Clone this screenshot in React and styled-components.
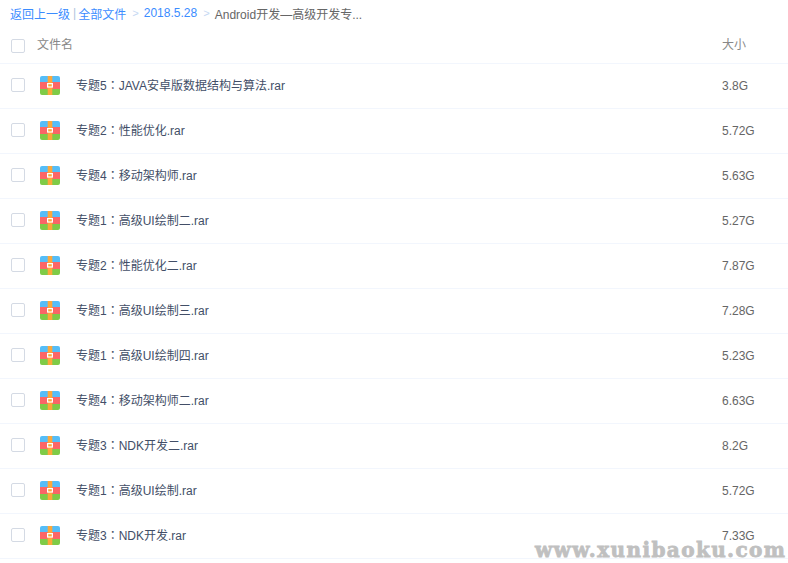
import React from "react";
import styled, { createGlobalStyle } from "styled-components";

const GlobalStyle = createGlobalStyle`
  html, body {
    margin: 0;
    padding: 0;
    background: #fff;
    font-family: "Liberation Sans", "Noto Sans CJK SC", sans-serif;
    font-size: 12px;
    overflow: hidden;
  }
`;

const Page = styled.div`
  position: relative;
  width: 788px;
  height: 563px;
  overflow: hidden;
  background: #fff;
`;

const Crumbs = styled.div`
  display: flex;
  align-items: center;
  height: 26px;
  padding-left: 10px;
  color: #666;
  white-space: nowrap;
`;

const CrumbLink = styled.a`
  color: #3b8cff;
`;

const Bar = styled.span`
  color: #b0c4de;
  margin: 0 2px 0 3px;
`;

const Arrow = styled.span`
  color: #c5d8f3;
  font-family: "Liberation Mono", monospace;
  font-size: 11px;
  margin: 1px 5px 0 6px;
`;

const Row = styled.div`
  display: flex;
  align-items: center;
  box-sizing: border-box;
  height: ${(p) => (p.$head ? "38px" : "45px")};
  padding-left: 11px;
  border-bottom: 1px solid #f2f6fd;
`;

const Check = styled.span`
  box-sizing: border-box;
  flex: none;
  width: 14px;
  height: 14px;
  margin-top: ${(p) => (p.$head ? "2px" : "0")};
  margin-bottom: ${(p) => (p.$head ? "0" : "2px")};
  border: 1px solid #d4dae4;
  border-radius: 2px;
`;

const HeadName = styled.span`
  flex: none;
  width: 685px;
  margin-left: 12px;
  margin-bottom: 2px;
  color: #888;
`;

const HeadSize = styled.span`
  margin-bottom: 2px;
  color: #888;
`;

const FileIcon = styled.svg`
  flex: none;
  width: 20px;
  height: 19px;
  margin-left: 15px;
  margin-bottom: 1px;
`;

const Name = styled.span`
  flex: none;
  width: 646px;
  margin-left: 16px;
  margin-bottom: 3px;
  color: #424e67;
`;

const Colon = styled.span`
  font-family: "Noto Sans CJK TC", sans-serif;
`;

const Size = styled.span`
  margin-bottom: 1px;
  color: #666;
`;

const Watermark = styled.div`
  position: absolute;
  left: 535px;
  top: 543px;
  color: #c0c0c0;
  font-family: "DejaVu Serif", serif;
  font-size: 20px;
  line-height: 14px;
  font-weight: 700;
  letter-spacing: 1.4px;
  -webkit-text-stroke: 0.8px #c0c0c0;
  white-space: nowrap;
`;

const files = [
  ["专题5", "JAVA安卓版数据结构与算法.rar", "3.8G"],
  ["专题2", "性能优化.rar", "5.72G"],
  ["专题4", "移动架构师.rar", "5.63G"],
  ["专题1", "高级UI绘制二.rar", "5.27G"],
  ["专题2", "性能优化二.rar", "7.87G"],
  ["专题1", "高级UI绘制三.rar", "7.28G"],
  ["专题1", "高级UI绘制四.rar", "5.23G"],
  ["专题4", "移动架构师二.rar", "6.63G"],
  ["专题3", "NDK开发二.rar", "8.2G"],
  ["专题1", "高级UI绘制.rar", "5.72G"],
  ["专题3", "NDK开发.rar", "7.33G"],
];

const RarIcon = () => (
  <FileIcon viewBox="0 0 20 19">
    <defs>
      <clipPath id="rarClip">
        <rect width="20" height="19" rx="2" />
      </clipPath>
    </defs>
    <g clipPath="url(#rarClip)">
      <rect width="20" height="6" fill="#55bdf7" />
      <rect y="6" width="20" height="7" fill="#fb6666" />
      <rect y="13" width="20" height="6" fill="#7fcb47" />
      <rect x="7.7" width="4.6" height="19" fill="#fda83a" />
      <rect x="7" y="7" width="6" height="4.6" fill="#fff" />
      <rect x="8.2" y="8.2" width="3.6" height="2.2" fill="#fda83a" />
    </g>
  </FileIcon>
);

export default function App() {
  return (
    <Page>
      <GlobalStyle />
      <Crumbs>
        <CrumbLink>返回上一级</CrumbLink>
        <Bar>|</Bar>
        <CrumbLink>全部文件</CrumbLink>
        <Arrow>&gt;</Arrow>
        <CrumbLink>2018.5.28</CrumbLink>
        <Arrow>&gt;</Arrow>
        <span>Android开发—高级开发专...</span>
      </Crumbs>
      <Row $head>
        <Check $head />
        <HeadName>文件名</HeadName>
        <HeadSize>大小</HeadSize>
      </Row>
      {files.map(([topic, name, size], i) => (
        <Row key={i}>
          <Check />
          <RarIcon />
          <Name>
            {topic}
            <Colon>：</Colon>
            {name}
          </Name>
          <Size>{size}</Size>
        </Row>
      ))}
      <Watermark>www.xunibaoku.com</Watermark>
    </Page>
  );
}
